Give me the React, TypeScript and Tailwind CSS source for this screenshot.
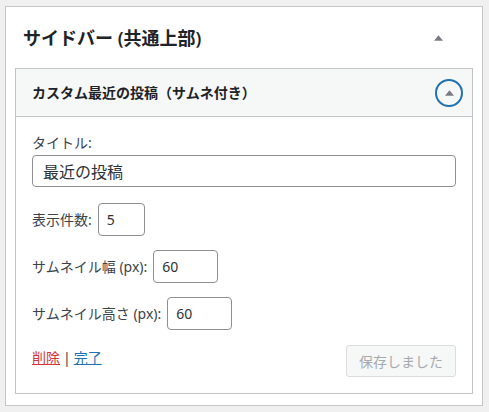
import { useState } from "react";

const FONT = "font-['Noto_Sans','Noto_Sans_CJK_JP',sans-serif]";

function ArrowUp({ className = "" }: { className?: string }) {
  return (
    <svg viewBox="0 0 8 5" className={className} fill="#787c82">
      <polygon points="4,0 8,5 0,5" />
    </svg>
  );
}

function NumberRow({
  label,
  suffix,
  value,
  width,
  onChange,
}: {
  label: string;
  suffix?: string;
  value: string;
  width: string;
  onChange: (v: string) => void;
}) {
  return (
    <div className="flex items-center">
      <label className="text-[14px] leading-5 text-[#3c434a]">
        {label}
        {suffix && <span> {suffix}</span>}:
      </label>
      <input
        value={value}
        onChange={(e) => onChange(e.target.value)}
        className={`${width} ml-[6px] h-[33px] rounded-[4px] border border-[#8c8f94] bg-white pl-[8px] text-[14px] text-[#2c3338] outline-none`}
      />
    </div>
  );
}

export default function App() {
  const [title, setTitle] = useState("最近の投稿");
  const [count, setCount] = useState("5");
  const [thumbW, setThumbW] = useState("60");
  const [thumbH, setThumbH] = useState("60");

  return (
    <div className={`min-h-screen bg-[#f0f0f1] pt-[6px] pl-[5px] pr-[6px] pb-[6px] ${FONT}`}>
      <div className="border border-[#c3c4c7] bg-white px-[9px] pb-[11px]">
        {/* Sidebar header */}
        <div className="flex h-[61px] items-center justify-between pl-[8px] pr-[30px]">
          <h2 className="text-[18px] font-semibold leading-6 text-[#1d2327]">サイドバー (共通上部)</h2>
          <ArrowUp className="h-[6px] w-[9px]" />
        </div>

        {/* Widget */}
        <div className="border border-[#c3c4c7]">
          <div className="flex h-[48px] items-center justify-between border-b border-[#c3c4c7] bg-[#f6f7f7] pl-[16px] pr-[9px]">
            <h3 className="text-[14px] font-semibold leading-5 text-[#1d2327]">
              カスタム最近の投稿（サムネ付き）
            </h3>
            <button className="flex h-[28px] w-[28px] items-center justify-center rounded-full border-2 border-[#2271b1]">
              <ArrowUp className="h-[6px] w-[9px]" />
            </button>
          </div>

          <div className="px-[16px] pt-[16px] pb-[16px]">
            <label className="block text-[14px] leading-5 text-[#3c434a]">タイトル:</label>
            <input
              value={title}
              onChange={(e) => setTitle(e.target.value)}
              className="mt-[2px] block h-[32px] w-full rounded-[4px] border border-[#8c8f94] bg-white pl-[10px] text-[16px] text-[#2c3338] outline-none"
            />

            <div className="mt-[16px] flex flex-col gap-[14px]">
              <NumberRow label="表示件数" value={count} width="w-[47px]" onChange={setCount} />
              <NumberRow label="サムネイル幅" suffix="(px)" value={thumbW} width="w-[65px]" onChange={setThumbW} />
              <NumberRow label="サムネイル高さ" suffix="(px)" value={thumbH} width="w-[65px]" onChange={setThumbH} />
            </div>

            <div className="mt-[15px] flex items-start justify-between">
              <div className="pt-[3px] text-[14px] leading-5 text-[#3c434a]">
                <a href="#" className="text-[#d63638] underline">削除</a>
                <span className="mx-[3px]">|</span>
                <a href="#" className="text-[#2271b1] underline">完了</a>
              </div>
              <button
                disabled
                className="h-[32px] w-[110px] rounded-[3px] border border-[#dcdcde] bg-[#f6f7f7] text-[14px] text-[#a7aaad]"
              >
                保存しました
              </button>
            </div>
          </div>
        </div>
      </div>
    </div>
  );
}
